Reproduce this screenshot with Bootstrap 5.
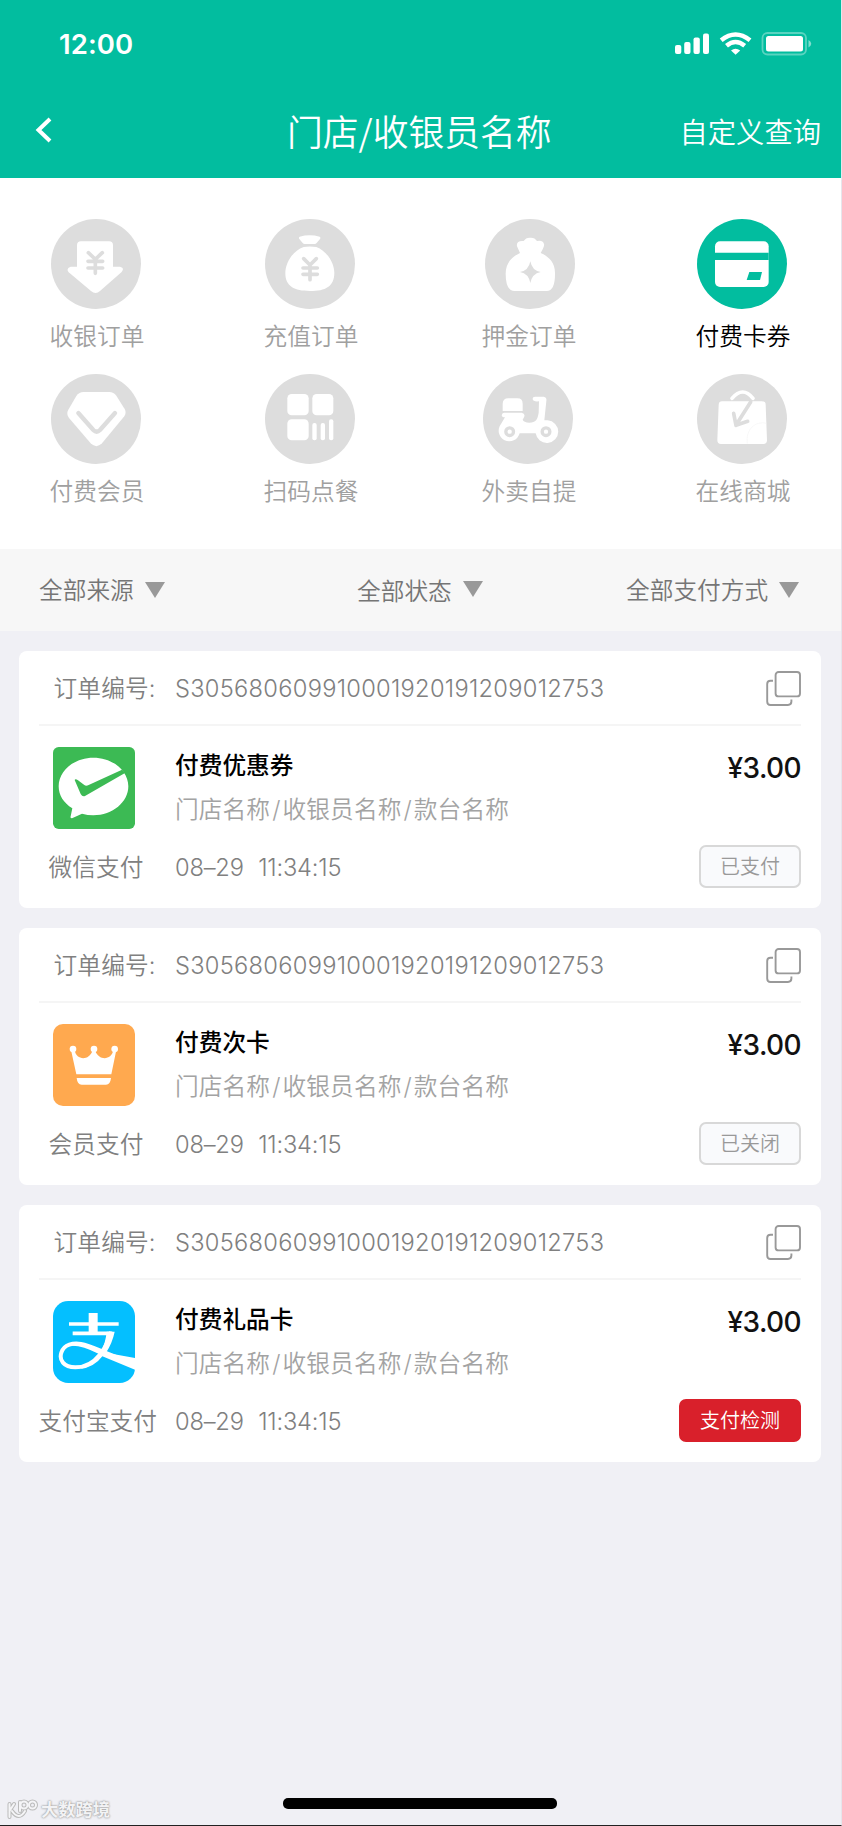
<!DOCTYPE html>
<html lang="zh-CN">
<head>
<meta charset="utf-8">
<meta name="viewport" content="width=device-width, initial-scale=1">
<title>门店/收银员名称</title>
<link href="https://cdn.jsdelivr.net/npm/bootstrap@5.3.0/dist/css/bootstrap.min.css" rel="stylesheet">
<style>
  :root { --brand: #02bd9f; }
  body { background: #f0f0f5; font-family: Inter, "Noto Sans CJK SC", sans-serif; font-weight: 350; font-size: 23.7px; line-height: 36px; color: #808080; }
  .screen { width: 842px; height: 1826px; border-right: 1px solid #e6e6ec; border-bottom: 1px solid #222; overflow: hidden; }
  .screen svg { display: block; flex: none; }
  .top-area { height: 178px; background: var(--brand); margin-right: -1px; }
  .status-row { height: 88px; padding: 0 29px 0 59px; }
  .clock { font-size: 27.5px; font-weight: 600; letter-spacing: .1px; }
  .title-row { height: 84px; display: grid; grid-template-columns: 287px 1fr auto; padding-right: 21px; }
  .title-row h1 { font-size: 35.8px; font-weight: 350; line-height: 50px; white-space: nowrap; font-family: "Noto Sans CJK SC", sans-serif; }
  .title-row a { font-size: 28.3px; line-height: 44px; padding-top: 6px; }
  .tab-grid { height: 371px; display: grid; grid-template-columns: 214px 218px 214px 96px; grid-auto-rows: 155px; padding: 41px 0 0 49px; }
  .tab-item { width: 96px; color: #a0a0a0; white-space: nowrap; text-align: center; --disc: #ddd; }
  .tab-item.active { color: #000; --disc: var(--brand); }
  .tab-item svg { width: 90px; height: 90px; margin: 0 0 10px 2px; }
  .filter-row { height: 82px; background: #f7f7f7; display: grid; grid-template-columns: 318px 269px auto; padding: 1px 40px 0 39px; color: #757575; align-items: center; }
  .filter-row span { display: flex; align-items: center; gap: 11px; white-space: nowrap; }
  .filter-row .mid-filter { padding-top: 2px; }
  .filter-row svg { margin-top: -1px; }
  .order-list { padding: 20px 20px 0 18.5px; gap: 20px; }
  .order-card { height: 257px; border: 0; border-radius: 8px; padding: 0 20px; color: inherit; }
  .order-head { height: 75px; border-bottom: 2px solid #f5f5f5; padding: 3px 0 0 15px; }
  .order-head .caption-col { width: 121.500px; letter-spacing: .15px; }
  .order-head svg { margin-top: -1px; }
  .serial { letter-spacing: .27px; }
  .order-body { display: grid; grid-template-columns: 136.500px 1fr auto; }
  .pay-col { width: 115px; text-align: center; white-space: nowrap; padding-top: 21px; }
  .pay-col svg { width: 82px; height: 82px; margin: 0 0 21px 14.500px; }
  .goods { font-size: 23.7px; line-height: 36px; font-weight: 500; color: #000; margin: 22px 0 8px; }
  .goods-sub { color: #a3a3a3; letter-spacing: .1px; }
  .goods-sub i { font-style: normal; padding: 0 2px; }
  .goods-time { margin-top: 22px; letter-spacing: -.2px; word-spacing: 8px; }
  .price { font-size: 28px; font-weight: 500; color: #111; line-height: 40px; margin: 22px 0 57px; letter-spacing: -.6px; }
  .state-btn { height: 43px; min-width: 102px; font-size: 20px; font-weight: 350; line-height: 38px; padding: 1px 19px 0; border-radius: 7px; border: 2px solid #d8d8d8; background: #f9fafc; color: #999; }
  .state-btn.alert-state { background: #d9202b; border-color: #d9202b; color: #fff; }
  .home-row { height: 27px; }
  .home-bar { width: 274px; height: 11px; border-radius: 5px; background: #000; position: absolute; left: 283px; top: 0; }
  .wm { font-size: 17.3px; font-weight: 700; line-height: 22px; color: #f3f3f5; text-shadow: 0 0 2px #999, 0 0 2px #aaa; padding: 1px 0 0 7px; gap: 3px; }
</style>
</head>
<body>
<svg width="0" height="0" class="position-absolute">
  <symbol id="i-copy" viewBox="0 0 35 35"><g fill="none" stroke="#999" stroke-width="1.9"><rect x="9.600" y="1" width="24.400" height="24.400" rx="3"/><path d="M7 9.700H4.500Q1.200 9.700 1.200 13V30.500Q1.200 34 4.500 34H22Q25.400 34 25.400 30.600V28.600"/></g></symbol>
  <symbol id="i-tri" viewBox="0 0 20 16"><path d="M0 0H20L10 16Z" fill="#999"/></symbol>
</svg>
<main class="screen d-flex flex-column">
  <header class="top-area text-white">
    <div class="status-row d-flex align-items-center justify-content-between">
      <span class="clock">12:00</span>
      <svg width="138" height="24" viewBox="0 0 138 24" fill="#fff"><rect x="0" y="13" width="6.3" height="9" rx="2"/><rect x="9.2" y="10" width="6.3" height="12" rx="2"/><rect x="18.5" y="5.5" width="6.3" height="16.500" rx="2"/><rect x="28" y="1.500" width="6" height="20.500" rx="2"/><g fill="none" stroke="#fff" stroke-width="4.600"><path d="M46.200 8.200Q60.500-3.200 75 8.200"/><path d="M51.500 13.700Q60.500 6.300 69.700 13.700"/></g><path d="M56 18.400Q60.500 15.200 65.200 18.400L60.600 22.800Z"/><rect x="87.500" y="1" width="43.500" height="21.500" rx="5" fill="none" stroke="#fff" stroke-opacity=".35" stroke-width="1.800"/><rect x="91" y="4" width="37" height="15.500" rx="2.500"/><path d="M133.500 8Q139 11.700 133.500 15.500Z" fill-opacity=".5"/></svg>
    </div>
    <nav class="title-row align-items-center">
      <div class="d-flex ps-4"><svg width="17" height="26" viewBox="0 0 17 26" style="margin-left:11px"><path d="M15 2L3.500 13L15 24" fill="none" stroke="#fff" stroke-width="4"/></svg></div>
      <h1 class="m-0">门店/收银员名称</h1>
      <a class="text-white text-decoration-none">自定义查询</a>
    </nav>
  </header>

  <section class="tab-grid bg-white">
    <div class="tab-item"><svg viewBox="0 0 270 270"><circle cx="135" cy="135" r="135" fill="var(--disc)"/><path d="M90 67H174Q186 67 186 79V143H207Q222 146 212 159L147 216Q134 228 120 216L53 160Q44 148 59 143H78V79Q78 67 90 67Z" fill="#fff"/><path d="M112 101L133 121L154 101M111 127H155M111 147H155M133 121V163" fill="none" stroke="var(--disc)" stroke-width="11" stroke-linecap="round"/></svg>收银订单</div>
    <div class="tab-item"><svg viewBox="0 0 270 270"><circle cx="135" cy="135" r="135" fill="var(--disc)"/><path d="M104 53Q134 45 164 53Q168 56 165 60L155 72Q152 76 147 75H121Q116 76 113 72L103 60Q100 56 104 53ZM116 84Q134 81 154 84C186 96 208 132 208 161C208 202 182 216 135 216C88 216 61 202 61 163C61 132 82 96 116 84Z" fill="#fff"/><path d="M116 119L135 138L154 119M114 147H157M114 166H157M135 138V182" fill="none" stroke="var(--disc)" stroke-width="11" stroke-linecap="round"/></svg>充值订单</div>
    <div class="tab-item"><svg viewBox="0 0 270 270" style="margin-left:4px"><circle cx="135" cy="135" r="135" fill="var(--disc)"/><path d="M116 66Q123 55 136 56Q149 55 156 66Q173 62 177 75Q179 81 167 102C188 111 210 128 210 161Q211 216 185 216H89Q62 216 62 164C62 130 82 113 105 102L96 82Q93 64 116 66Z" fill="#fff"/><path d="M136 127Q141 155 167 159Q141 164 136 192Q131 164 105 159Q131 155 136 127Z" fill="var(--disc)"/></svg>押金订单</div>
    <div class="tab-item active"><svg viewBox="0 0 270 270"><circle cx="135" cy="135" r="135" fill="var(--disc)"/><rect x="54" y="67" width="161" height="137" rx="15" fill="#fff"/><path d="M54 101H215V123H54ZM157 159H195L189 183H149Z" fill="var(--disc)"/></svg>付费卡券</div>
    <div class="tab-item"><svg viewBox="0 0 270 270"><circle cx="135" cy="135" r="135" fill="var(--disc)"/><path d="M98 54H175Q188 54 196 65L221 105Q227 116 220 127L153 208Q136 225 119 208L54 132Q45 119 52 107L76 66Q84 54 98 54Z" fill="#fff"/><path d="M82 117L127 168Q137 178 147 168L192 117" fill="none" stroke="var(--disc)" stroke-width="13" stroke-linecap="round"/></svg>付费会员</div>
    <div class="tab-item"><svg viewBox="0 0 270 270"><circle cx="135" cy="135" r="135" fill="var(--disc)"/><g fill="#fff"><rect x="67" y="60" width="64" height="64" rx="13"/><rect x="142" y="60" width="63" height="64" rx="13"/><rect x="67" y="136" width="64" height="63" rx="13"/><rect x="142" y="147" width="13" height="52" rx="6"/><rect x="167" y="147" width="13" height="52" rx="6"/><rect x="192" y="136" width="13" height="63" rx="6"/></g></svg>扫码点餐</div>
    <div class="tab-item"><svg viewBox="0 0 270 270"><circle cx="135" cy="135" r="135" fill="var(--disc)"/><g fill="#fff"><path d="M59 111V90Q59 73 76 73H103Q119 73 119 89V111ZM64 116H116Q128 118 123 130L119 137Q122 145 139 146C159 145 164 136 167 116L168 82Q151 84 149 76Q148 68 156 68H182Q192 70 190 81L184 139H194A34 34 0 1 1 158 178H110A32 32 0 1 1 54 150L66 130Q51 129 59 118Z"/></g><g fill="#fff" stroke="var(--disc)" stroke-width="10"><circle cx="80" cy="173" r="11.500"/><circle cx="189" cy="173" r="11.500"/></g></svg>外卖自提</div>
    <div class="tab-item"><svg viewBox="0 0 270 270"><circle cx="135" cy="135" r="135" fill="var(--disc)"/><path d="M75 82H195Q206 82 206 92L210 199Q210 210 199 210H72Q61 210 61 199L65 92Q66 82 75 82Z" fill="#fff"/><path d="M105 73Q121 54 137 54Q153 54 168 73" fill="none" stroke="#fff" stroke-width="11" stroke-linecap="round"/><path d="M161 84L119 150M110 118L117 154L152 142" fill="none" stroke="var(--disc)" stroke-width="11" stroke-linecap="round" stroke-linejoin="round"/><path d="M151 209C145 165 176 140 208 148" fill="none" stroke="#f5f5f5" stroke-width="2"/></svg>在线商城</div>
  </section>

  <section class="filter-row">
    <span>全部来源 <svg width="20" height="16"><use href="#i-tri"/></svg></span>
    <span class="mid-filter">全部状态 <svg width="20" height="16" class="mb-1"><use href="#i-tri"/></svg></span>
    <span>全部支付方式 <svg width="20" height="16"><use href="#i-tri"/></svg></span>
  </section>

  <section class="order-list d-flex flex-column">
    <article class="card order-card">
      <div class="order-head d-flex align-items-center">
        <span class="caption-col">订单编号:</span><span class="serial">S305680609910001920191209012753</span>
        <svg class="ms-auto" width="35" height="35"><use href="#i-copy"/></svg>
      </div>
      <div class="order-body">
        <div class="pay-col">
          <svg viewBox="0 0 246 246"><rect width="246" height="246" rx="17" fill="#3cba54"/><path d="M121 32C179 32 226 71 226 118S179 205 121 205Q104 205 87 200L57 214Q51 214 53 208L58 184C32 168 17 145 17 118C17 71 64 32 121 32Z" fill="#fff"/><path d="M65 99Q67 94 75 100L94 114Q99 118 107 114L207 68L216 78L96 147Q88 150 83 141Z" fill="#3cba54"/></svg>
          微信支付
        </div>
        <div><h2 class="goods">付费优惠券</h2><div class="goods-sub">门店名称<i>/</i>收银员名称<i>/</i>款台名称</div><div class="goods-time">08–29 11:34:15</div></div>
        <div class="d-flex flex-column align-items-end"><div class="price">¥3.00</div><button class="btn state-btn">已支付</button></div>
      </div>
    </article>

    <article class="card order-card">
      <div class="order-head d-flex align-items-center">
        <span class="caption-col">订单编号:</span><span class="serial">S305680609910001920191209012753</span>
        <svg class="ms-auto" width="35" height="35"><use href="#i-copy"/></svg>
      </div>
      <div class="order-body">
        <div class="pay-col">
          <svg viewBox="0 0 246 246"><rect width="246" height="246" rx="30" fill="#ffa94f"/><g fill="#fff"><circle cx="60" cy="75" r="10"/><circle cx="123" cy="75" r="10"/><circle cx="185" cy="75" r="10"/><path d="M54 78L70 151H175L190 78L181 79C175 110 137 110 127 81H118C109 110 70 110 65 79ZM71 162H174Q172 182 159 182H86Q73 182 71 162Z"/></g></svg>
          会员支付
        </div>
        <div><h2 class="goods">付费次卡</h2><div class="goods-sub">门店名称<i>/</i>收银员名称<i>/</i>款台名称</div><div class="goods-time">08–29 11:34:15</div></div>
        <div class="d-flex flex-column align-items-end"><div class="price">¥3.00</div><button class="btn state-btn">已关闭</button></div>
      </div>
    </article>

    <article class="card order-card">
      <div class="order-head d-flex align-items-center">
        <span class="caption-col">订单编号:</span><span class="serial">S305680609910001920191209012753</span>
        <svg class="ms-auto" width="35" height="35"><use href="#i-copy"/></svg>
      </div>
      <div class="order-body">
        <div class="pay-col">
          <svg viewBox="0 0 246 246"><rect width="246" height="246" rx="46" fill="#04bfff"/><path d="M48 69H197M59 97H178" fill="none" stroke="#fff" stroke-width="11"/><path d="M107 36H134V100H107Z" fill="#fff"/><path d="M174 92C164 131 132 199 67 199C31 199 18 176 25 155C33 130 61 125 84 129C122 135 152 159 246 188" fill="none" stroke="#fff" stroke-width="12"/><path d="M161 92H185Q178 126 159 155L246 171V206L148 166Q124 199 79 205Q121 189 138 159L113 146L145 150Q158 123 161 92ZM40 138Q70 112 119 139L145 150L138 159Q70 125 40 138Z" fill="#fff"/></svg>
          支付宝支付
        </div>
        <div><h2 class="goods">付费礼品卡</h2><div class="goods-sub">门店名称<i>/</i>收银员名称<i>/</i>款台名称</div><div class="goods-time">08–29 11:34:15</div></div>
        <div class="d-flex flex-column align-items-end"><div class="price">¥3.00</div><button class="btn state-btn alert-state">支付检测</button></div>
      </div>
    </article>
  </section>

  <footer class="home-row mt-auto position-relative">
    <div class="wm d-flex align-items-center">
      <svg width="31" height="22" viewBox="0 0 31 22" fill="none" stroke-linecap="round"><g stroke="#bbb" stroke-width="4"><path d="M2.500 5V18M2.500 12L7 5M5 12Q12 22 18 12M13 3V12"/><circle cx="17" cy="6" r="3.500"/><circle cx="25.500" cy="6" r="3.500"/></g><g stroke="#f5f5f7" stroke-width="2"><path d="M2.500 5V18M2.500 12L7 5M5 12Q12 22 18 12M13 3V12"/><circle cx="17" cy="6" r="3.500"/><circle cx="25.500" cy="6" r="3.500"/></g></svg>
      大数跨境
    </div>
    <div class="home-bar"></div>
  </footer>
</main>
<script src="https://cdn.jsdelivr.net/npm/bootstrap@5.3.0/dist/js/bootstrap.bundle.min.js"></script>
</body>
</html>
